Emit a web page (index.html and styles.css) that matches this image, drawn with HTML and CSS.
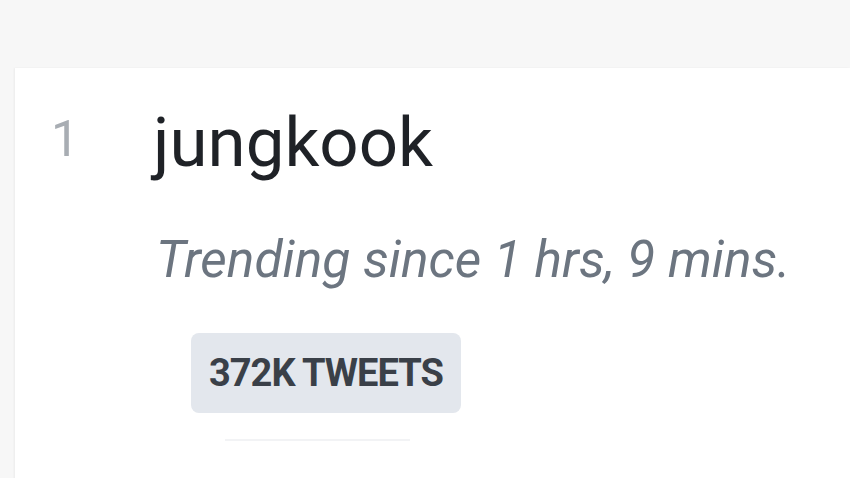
FILE: index.html
```html
<!DOCTYPE html>
<html>
<head>
<meta charset="utf-8">
<link rel="stylesheet" href="styles.css">
</head>
<body>
<div class="card">
  <div class="item">
    <div class="rank">1</div>
    <div class="body">
      <div class="name">jungkook</div>
      <div class="since">Trending since 1 hrs, 9 mins.</div>
      <div class="badge">372K TWEETS</div>
      <div class="divider"></div>
    </div>
  </div>
</div>
</body>
</html>
```
FILE: styles.css
```css
html, body {
  margin: 0;
  padding: 0;
  background: #f7f7f7;
  font-family: Roboto, "Liberation Sans", sans-serif;
  height: 100%;
  overflow: hidden;
}
.card {
  margin: 68px 0 0 15px;
  background: #ffffff;
  height: 420px;
  box-shadow: -1px 0 2px rgba(0,0,0,0.05);
}
.item {
  display: flex;
  padding: 40px 0 0 36px;
}
.rank {
  width: 102px;
  padding-top: 6px;
  font-size: 50px;
  line-height: 1;
  color: #a8adb3;
}
.body {
  display: flex;
  flex-direction: column;
  align-items: flex-start;
}
.name {
  font-size: 69px;
  line-height: 1;
  color: #1f2227;
}
.since {
  margin-top: 52px;
  font-size: 51.5px;
  font-style: italic;
  color: #6c7580;
  margin-left: 3px;
}
.badge {
  margin: 43px 0 0 38px;
  background: #e3e7ed;
  border-radius: 8px;
  padding: 18px 18px;
  font-size: 38px;
  letter-spacing: -1px;
  font-weight: 700;
  color: #3a4048;
}
.divider {
  margin: 26px 0 0 72px;
  width: 185px;
  height: 2px;
  background: #f2f3f5;
}
```
